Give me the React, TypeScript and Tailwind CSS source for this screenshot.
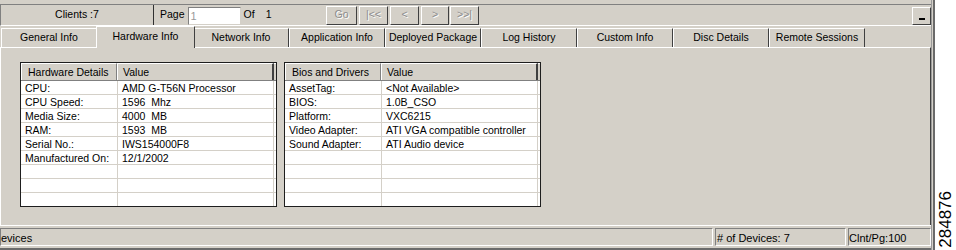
import React from "react";

const hw: [string, string][] = [
  ["CPU:", "AMD G-T56N Processor"],
  ["CPU Speed:", "1596  Mhz"],
  ["Media Size:", "4000  MB"],
  ["RAM:", "1593  MB"],
  ["Serial No.:", "IWS154000F8"],
  ["Manufactured On:", "12/1/2002"],
];

const bios: [string, string][] = [
  ["AssetTag:", "<Not Available>"],
  ["BIOS:", "1.0B_CSO"],
  ["Platform:", "VXC6215"],
  ["Video Adapter:", "ATI VGA compatible controller"],
  ["Sound Adapter:", "ATI Audio device"],
];

const tabs = [
  "General Info",
  "Hardware Info",
  "Network Info",
  "Application Info",
  "Deployed Package",
  "Log History",
  "Custom Info",
  "Disc Details",
  "Remote Sessions",
];

function Table({ title, rows }: { title: string; rows: [string, string][] }) {
  const all: [string, string][] = [...rows];
  while (all.length < 9) all.push(["", ""]);
  return (
    <div className="w-[257px] h-[145px] border border-[#1e1e1e] bg-white flex flex-col overflow-hidden">
      <div className="h-[18px] shrink-0 flex bg-[#d4d0c8] border-b border-[#808080]">
        <div className="w-[96px] border-t border-l border-white border-r border-r-[#808080] pl-[6px] leading-[16px] whitespace-nowrap">
          {title}
        </div>
        <div className="w-[157px] border-t border-l border-white border-r-2 border-r-[#404040] pl-[5px] leading-[16px]">
          Value
        </div>
        <div className="flex-1 border-t border-white" />
      </div>
      {all.map((r, i) => (
        <div key={i} className="h-[14px] shrink-0 flex border-b border-[#d4d0c8]">
          <div className="w-[97px] border-r border-[#d4d0c8] pl-[4px] pt-[1px] leading-[13px] whitespace-pre">
            {r[0]}
          </div>
          <div className="w-[156px] border-r border-[#d4d0c8] pl-[4px] pt-[1px] leading-[13px] whitespace-pre">
            {r[1]}
          </div>
          <div className="flex-1" />
        </div>
      ))}
    </div>
  );
}

function NavButton({ label, w, ml }: { label: string; w: string; ml: string }) {
  return (
    <div
      className={`${w} ${ml} h-[19px] flex items-center justify-center border-t border-l border-white border-r border-b border-r-[#404040] border-b-[#404040] text-[#8c8c8c] [text-shadow:1px_1px_0_#ffffff] whitespace-pre`}
    >
      {label}
    </div>
  );
}

export default function App() {
  return (
    <div className="w-[956px] h-[250px] flex bg-white font-['Liberation_Sans',Arial,sans-serif] text-[10.5px] text-black overflow-hidden">
      {/* main window area */}
      <div className="w-[931px] h-[250px] bg-[#d4d0c8] flex flex-col pt-[4px]">
        {/* toolbar */}
        <div className="h-[22px] shrink-0 flex items-center border-t border-l border-[#808080] border-b border-b-white">
          <div className="w-[152px] self-stretch flex items-center justify-center">Clients :7</div>
          <div className="w-px self-stretch bg-[#303030]" />
          <div className="w-[172px] self-stretch flex items-center pl-[6px]">
            <span>Page</span>
            <div className="ml-[3px] mt-[1px] w-[53px] h-[18px] bg-white border-t border-l border-[#808080] border-r border-b border-r-[#d4d0c8] border-b-[#d4d0c8] pl-[2px] text-[11px] leading-[16px] text-[#9a9a9a]">
              1
            </div>
            <span className="ml-[3px]">Of</span>
            <span className="ml-[11px]">1</span>
          </div>
          <NavButton label="Go" w="w-[31px]" ml="ml-0" />
          <NavButton label="|<<" w="w-[29px]" ml="ml-[2px]" />
          <NavButton label="<" w="w-[29px]" ml="ml-[2px]" />
          <NavButton label=">" w="w-[28px]" ml="ml-[2px]" />
          <NavButton label=">>|" w="w-[29px]" ml="ml-[1px]" />
          <div className="ml-auto w-[19px] h-[18px] mt-[1px] flex items-end justify-center pb-[4px] border-t border-l border-white border-r border-b border-r-[#404040] border-b-[#404040]">
            <div className="w-[6px] h-[2px] bg-black" />
          </div>
        </div>

        {/* tabs */}
        <div className="h-[21px] shrink-0 flex items-end pl-[1px]">
          {tabs.map((t, i) =>
            i === 1 ? (
              <div
                key={t}
                className="relative z-10 w-[99px] -ml-[1px] -mr-[2px] -mb-[1px] h-[22px] bg-[#d4d0c8] flex items-center justify-center pb-[2px] border-t border-l border-white border-r border-r-[#404040] whitespace-nowrap"
              >
                {t}
              </div>
            ) : (
              <div
                key={t}
                className="w-[96px] h-[19px] flex items-center justify-center border-t border-l border-white border-r border-r-[#404040] whitespace-nowrap"
              >
                {t}
              </div>
            )
          )}
        </div>

        {/* panel */}
        <div className="h-[178px] shrink-0 border-t border-l border-white border-r border-r-[#404040] pt-[14px] pl-[19px] flex items-start gap-[7px]">
          <Table title="Hardware Details" rows={hw} />
          <Table title="Bios and Drivers" rows={bios} />
        </div>

        {/* status bar */}
        <div className="h-[25px] shrink-0 border-t border-white pt-[2px] pb-[2px] border-b-2 border-b-[#6b6b6b] flex text-[11px]">
          <div className="w-[713px] h-[18px] border-t border-l border-[#808080] border-r border-b border-r-white border-b-white leading-[17px] pt-[1px]">
            evices
          </div>
          <div className="ml-[2px] w-[131px] h-[18px] border-t border-l border-[#808080] border-r border-b border-r-white border-b-white pl-[1px] leading-[17px] pt-[1px]">
            # of Devices: 7
          </div>
          <div className="ml-[2px] w-[83px] h-[18px] border-t border-l border-[#808080] border-r border-b border-r-white border-b-white leading-[17px] pt-[1px]">
            Clnt/Pg:100
          </div>
        </div>
      </div>

      {/* window frame edge */}
      <div className="w-[4px] h-[250px] bg-[#d4d0c8] border-l border-[#9a9a9a] border-r-2 border-r-[#6a6a6a]" />

      {/* figure label strip */}
      <div className="w-[21px] h-[250px] bg-white flex items-end justify-center pb-[2px]">
        <span className="[writing-mode:vertical-rl] rotate-180 text-[17px] leading-none text-black">284876</span>
      </div>
    </div>
  );
}
